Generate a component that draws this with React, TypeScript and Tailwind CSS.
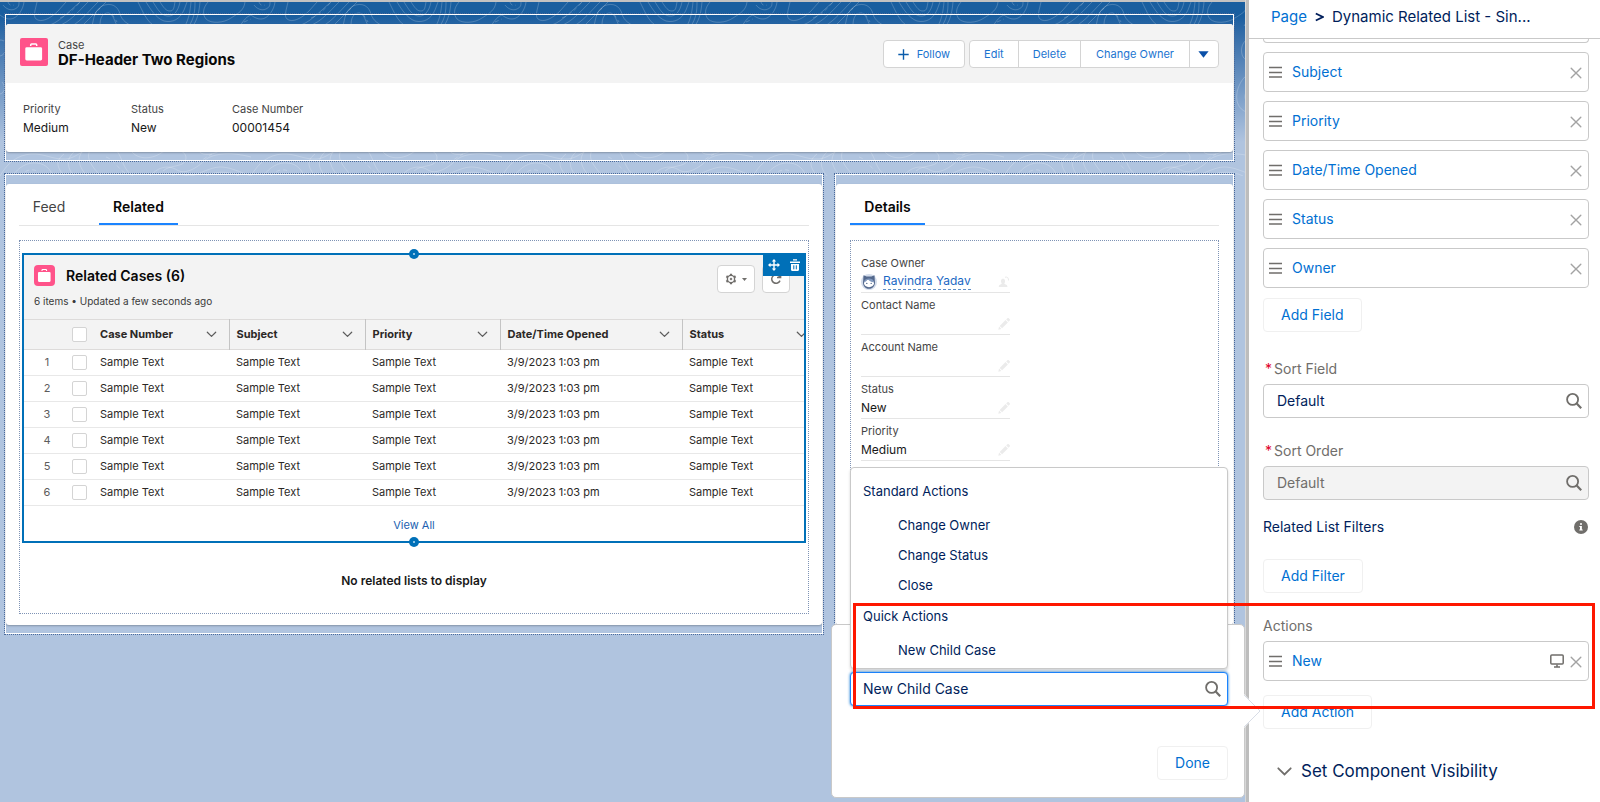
import React from 'react';

const columns = ['Case Number', 'Subject', 'Priority', 'Date/Time Opened', 'Status'];
const rows = [1, 2, 3, 4, 5, 6];
const relatedFields = ['Subject', 'Priority', 'Date/Time Opened', 'Status', 'Owner'];

function CaseIcon({ className }: { className: string }) {
  return (
    <svg viewBox="0 0 28 28" className={className} aria-hidden="true">
      <rect width="28" height="28" rx="2" fill="#ff538a" />
      <path d="M10.7 8V6.9c0-.5.4-.9.9-.9h4.2c.5 0 .9.4.9.9V8" fill="none" stroke="#fff" strokeWidth="1.5" />
      <rect x="5.3" y="9.3" width="16.8" height="13.2" rx="1.4" fill="#fff" />
    </svg>
  );
}

function Chevron({ className }: { className: string }) {
  return (
    <svg viewBox="0 0 12 8" className={className} fill="none" stroke="#5c5c5c" strokeWidth="1.4" strokeLinecap="round" strokeLinejoin="round" aria-hidden="true">
      <path d="M1.2 1.4 6 6.2l4.8-4.8" />
    </svg>
  );
}

function SearchIcon() {
  return (
    <svg viewBox="0 0 16 16" className="h-4 w-4 shrink-0" fill="none" stroke="#706e6b" aria-hidden="true">
      <circle cx="6.6" cy="6.4" r="5.5" strokeWidth="1.8" />
      <path d="m10.7 10.6 4.5 4.6" strokeWidth="2.2" />
    </svg>
  );
}

function CloseIcon() {
  return (
    <svg viewBox="0 0 12 12" className="h-3 w-3" fill="none" stroke="#a3a3a3" strokeWidth="1.4" strokeLinecap="round" aria-hidden="true">
      <path d="m1.2 1.2 9.6 9.6M10.8 1.2l-9.6 9.6" />
    </svg>
  );
}

function Topography() {
  return (
    <svg className="absolute inset-x-0 top-0 h-[174px] w-full" aria-hidden="true">
      <defs>
        <pattern id="topo" width="251" height="174" patternUnits="userSpaceOnUse">
          <g fill="none" stroke="#fff" strokeOpacity="0.2" strokeWidth="1">
            <path d="M0 13c5 4 10 5 14 3s9-8 10-16M3 3c3 4 8 6 12 4s4-4 4-7M37 0c-2 9-4 14-1 17 5 4 14 0 22-8l8-9M46 24c12-2 22-14 34-24M58 24c12-4 20-14 30-24M72 24c10-6 16-14 26-24M82 24l24-24" />
            <path d="M92 24c2-8 2-15 10-20 9-4 16 0 18 8 2 7 8 10 12 12M100 24c0-8 2-12 7-13s7 6 10 13M138 0c5 10 8 18 16 24M146 0c5 8 10 16 18 19 9 2 16-2 20-11l3-8M153 0c5 8 8 13 14 14s11-4 13-14M160 0c4 6 6 9 10 9s4-4 5-9M185 24c4-8 5-14 6-24M189 24c5-8 6-14 6-24M193 24c5-8 6-14 7-24" />
            <path d="M208 0c-5 6-6 12-2 17 5 5 18 4 25-1 8-5 13-8 14-16M240 24c4-6 6-9 11-11" />
            <path d="M8 0c1 3 3 4 6 3M60 16c8-3 14-9 20-16M94 14l6-8M112 12l5 8M244 20l7-3" strokeDasharray="4 3" />
            <path d="M0 38c10 0 8 14 0 16M246 36c-12 4-10 22-2 22s8-8 7-16M251 70c-12 0-22 20-17 32 3 8 12 10 17 8M251 82c-8 2-12 12-9 16s7 4 9 2M0 92c5-1 6-8 2-12" />
            <path d="M0 174c8-14 18-21 31-22s22 6 35 5 24-18 41-14 12 22 26 31M12 174c7-9 15-14 25-13s14 8 16 13M64 152c-9 7-7 13 0 22M74 150c-9 8-6 17 0 24M84 148c-9 8-4 18 3 26M92 146c-8 8-1 18 9 28M132 150c8 9 22 6 29 1s25-5 25 5-16 6-23 13M150 174c9-10 19-11 27-6s20-2 27-9 24-10 47-4M172 174c7-4 12 0 18 0s20-9 30-9 17 4 31 9M206 174c9-5 23-5 33 0M128 146c9-6 19-5 27 1M199 144c-4 9 11 11 20 5" />
            <path d="M20 174c4-5 11-8 17-5M106 155c9 3 12 12 19 16M190 160c9 3 15-5 22-8" strokeDasharray="4 3" />
          </g>
        </pattern>
      </defs>
      <rect width="100%" height="100%" fill="url(#topo)" />
    </svg>
  );
}

function Region({ children }: { children: React.ReactNode }) {
  return (
    <section className="flex min-w-0 border border-dotted border-[#4a6a9c]">
      <div className="flex min-w-0 flex-1 flex-col border border-white pt-[9px] pb-2">
        <div className="flex flex-1 flex-col overflow-hidden rounded-[3px] bg-white shadow-[0_1px_2px_rgba(0,0,0,0.25)]">{children}</div>
      </div>
    </section>
  );
}

function RecordHeader() {
  const stats = [
    { label: 'Priority', value: 'Medium', width: 'w-[108px]' },
    { label: 'Status', value: 'New', width: 'w-[101px]' },
    { label: 'Case Number', value: '00001454', width: 'w-[101px]' },
  ];
  return (
    <Region>
      <header className="flex h-[59px] items-start justify-between bg-[#f3f3f3] px-[14px]">
        <div className="flex pt-[14px]">
          <CaseIcon className="h-7 w-7" />
          <div className="ml-[10px]">
            <p className="text-[11px] leading-[14px] text-[#444]">Case</p>
            <h1 className="text-[15px] leading-4 font-bold text-[#080707]">DF-Header Two Regions</h1>
          </div>
        </div>
        <div className="flex gap-1 pt-4 text-[11px] text-[#1b74d0]">
          <button className="flex h-7 items-center gap-2 rounded border border-[#d4d4d4] bg-white px-[14px]">
            <svg viewBox="0 0 11 11" className="h-[11px] w-[11px]" stroke="#0b5cab" strokeWidth="1.4" aria-hidden="true">
              <path d="M5.5.3v10.4M.3 5.5h10.4" />
            </svg>
            Follow
          </button>
          <div className="flex h-7 divide-x divide-[#d4d4d4] rounded border border-[#d4d4d4] bg-white">
            <button className="px-[14px]">Edit</button>
            <button className="px-[14px]">Delete</button>
            <button className="px-[15px]">Change Owner</button>
            <button className="w-7 px-2" aria-label="More actions">
              <svg viewBox="0 0 11 7" className="h-[7px] w-[11px]" aria-hidden="true">
                <path d="M.4.3h10.2L5.5 6.7z" fill="#0b50a8" />
              </svg>
            </button>
          </div>
        </div>
      </header>
      <dl className="flex px-[17px] pt-[18px] pb-4">
        {stats.map((s) => (
          <div key={s.label} className={s.width}>
            <dt className="text-[11px] leading-4 text-[#444]">{s.label}</dt>
            <dd className="mt-[2px] text-xs leading-[17px] text-[#181818]">{s.value}</dd>
          </div>
        ))}
      </dl>
    </Region>
  );
}

function GearIcon() {
  return (
    <svg viewBox="0 0 12 12" className="h-3 w-3" fill="none" stroke="#706e6b" aria-hidden="true">
      <path d="M6 .8v1.6M6 9.6v1.6M1.4 3.3l1.5.9M9.1 7.8l1.5.9M1.4 8.7l1.5-.9M9.1 4.2l1.5-.9" strokeWidth="2.2" />
      <circle cx="6" cy="6" r="3.6" strokeWidth="1.4" />
      <circle cx="6" cy="6" r="1" fill="#706e6b" strokeWidth=".5" />
    </svg>
  );
}

function Handle({ className }: { className: string }) {
  return (
    <span className={`absolute left-1/2 flex h-[10px] w-[10px] -translate-x-1/2 items-center justify-center rounded-full bg-[#0070b8] ${className}`}>
      <span className="h-[2px] w-[2px] rounded-full bg-[#b9dcf2]" />
    </span>
  );
}

function Checkbox({ label }: { label: string }) {
  return (
    <input
      type="checkbox"
      aria-label={label}
      className="block h-[15px] w-[15px] appearance-none rounded-[2px] border border-[#d4d4d4] bg-white"
    />
  );
}

function RelatedCases() {
  return (
    <div className="relative mx-[2px] mt-3 border-2 border-[#0070b8]">
      <Handle className="-top-[6px]" />
      <Handle className="-bottom-[6px]" />
      <div className="flex h-16 justify-between bg-[#f3f3f3] px-[10px] pt-[10px]">
        <div>
          <div className="flex items-center">
            <CaseIcon className="h-[21px] w-[21px] rounded" />
            <h2 className="ml-[11px] text-sm leading-5 font-semibold text-[#080707]">Related Cases (6)</h2>
          </div>
          <p className="mt-[7px] text-[10px] leading-4 text-[#3a3a3a]">6 items • Updated a few seconds ago</p>
        </div>
        <div className="flex gap-[7px] pr-1">
          <button className="flex h-7 w-[38px] items-center justify-center gap-[5px] rounded border border-[#d4d4d4] bg-white" aria-label="List settings">
            <GearIcon />
            <svg viewBox="0 0 5 3" className="h-[3px] w-[5px]" aria-hidden="true">
              <path d="M0 0h5L2.5 3z" fill="#706e6b" />
            </svg>
          </button>
          <button className="flex h-7 w-7 items-center justify-center rounded border border-[#d4d4d4] bg-white" aria-label="Refresh">
            <svg viewBox="0 0 12 12" className="h-3 w-3" fill="none" stroke="#706e6b" strokeWidth="1.5" aria-hidden="true">
              <path d="M10 7.6A4.3 4.3 0 1 1 8.8 2.7l1.4 1.5M10.6 1v3.5H7" />
            </svg>
          </button>
        </div>
      </div>
      <div className="absolute -top-[2px] -right-[2px] flex h-[23px] w-[43px] items-center justify-between bg-[#0070b8] px-[5px]">
        <button aria-label="Move component">
          <svg viewBox="0 0 12 12" className="block h-3 w-3" fill="#fff" aria-hidden="true">
            <path d="M6 0l2.2 2.5H6.7v2.8h2.8V3.8L12 6 9.5 8.2V6.7H6.7v2.8h1.5L6 12 3.8 9.5h1.5V6.7H2.5v1.5L0 6l2.5-2.2v1.5h2.8V2.5H3.8z" />
          </svg>
        </button>
        <button aria-label="Delete component">
          <svg viewBox="0 0 12 12" className="block h-3 w-3" fill="none" aria-hidden="true">
            <path d="M1 2.5h10v1.6H1zM4 .3h4v1.2H4zM2 5h8v5.8c0 .6-.5 1.2-1.1 1.2H3.100C2.500 12 2 11.4 2 10.800z" fill="#fff" />
            <path d="M4.800 6.300v4M7.300 6.300v4" stroke="#0070b8" />
          </svg>
        </button>
      </div>
      <div className="overflow-hidden">
        <table className="w-[795px] table-fixed border-collapse text-left text-[11px] text-[#2b2826]">
          <colgroup>
            <col className="w-[42px]" />
            <col className="w-[27px]" />
            <col className="w-[136px]" />
            <col className="w-[136px]" />
            <col className="w-[135px]" />
            <col className="w-[182px]" />
            <col className="w-[137px]" />
          </colgroup>
          <thead>
            <tr className="h-[30px] border-y border-[#dddbda] bg-[#f3f3f3]">
              <td />
              <th className="pl-[6px]">
                <Checkbox label="Select all rows" />
              </th>
              {columns.map((c, i) => (
                <th key={c} className={i < columns.length - 1 ? 'border-r border-[#c4c4c4] pr-3 pl-[7px]' : 'pr-3 pl-[7px]'}>
                  <div className="flex items-center justify-between">
                    {c}
                    <Chevron className="h-[7px] w-[11px]" />
                  </div>
                </th>
              ))}
            </tr>
          </thead>
          <tbody>
            {rows.map((n) => (
              <tr key={n} className="h-[26px] border-b border-[#e8e8e8]">
                <td className="pl-1 text-center text-[#5c5c5c]">{n}</td>
                <td className="pl-[6px]">
                  <Checkbox label={`Select row ${n}`} />
                </td>
                {columns.map((c) => (
                  <td key={c} className="pl-[7px]">
                    {c === 'Date/Time Opened' ? '3/9/2023 1:03 pm' : 'Sample Text'}
                  </td>
                ))}
              </tr>
            ))}
          </tbody>
        </table>
      </div>
      <div className="flex h-[35px] items-center justify-center pt-1 text-[11px]">
        <a href="#all" className="text-[#1b5fb0]">View All</a>
      </div>
    </div>
  );
}

function RelatedRegion() {
  return (
    <Region>
      <div className="mx-[13px] flex h-[42px] border-b border-[#e5e5e5]" role="tablist">
        <button role="tab" aria-selected="false" className="w-[80px] pt-1 pr-5 text-center text-sm text-[#444]">Feed</button>
        <button role="tab" aria-selected="true" className="w-[79px] border-b-2 border-[#1b84ff] pt-[6px] text-sm font-semibold text-[#080707]">Related</button>
      </div>
      <div className="mx-[13px] mt-[14px] mb-[11px] flex-1 border border-dotted border-[#7f93b5]">
        <RelatedCases />
        <p className="pt-[30px] pb-6 text-center text-xs leading-4 font-semibold text-[#181818]">No related lists to display</p>
      </div>
    </Region>
  );
}

function Avatar() {
  return (
    <svg viewBox="0 0 16 16" className="h-4 w-4" aria-hidden="true">
      <circle cx="8" cy="8" r="8" fill="#d3dceb" />
      <path d="M2.5 1.3 5.6 2.6h4.800l3.100-1.300.3 5.200c1 5-2 8.300-5.800 8.300S1.200 11.500 2.200 6.500z" fill="#54698d" />
      <ellipse cx="8" cy="9.3" rx="5" ry="3.9" fill="#fff" />
      <path d="M3 8.200c2-.5 3-1.900 4-3 .8 1.400 3 2.800 6 3-.4-2.600-2.500-3.600-5-3.600S3.400 5.700 3 8.200z" fill="#8199bf" />
      <circle cx="5.8" cy="9.4" r=".7" fill="#54698d" />
      <circle cx="10.2" cy="9.4" r=".7" fill="#54698d" />
    </svg>
  );
}

function Pencil() {
  return (
    <svg viewBox="0 0 12 12" className="h-3 w-3" fill="#ebebeb" aria-hidden="true">
      <path d="m.3 11.7.8-3.1 2.3 2.3zM1.7 7.9l5.8-5.8 2.4 2.4-5.800 5.800zM8.200 1.400 9.400.3c.4-.4 1-.4 1.400 0l.9.9c.4.4.4 1 0 1.400l-1.100 1.200z" />
    </svg>
  );
}

function DetailField({ label, children, icon }: { label: string; children?: React.ReactNode; icon?: React.ReactNode }) {
  return (
    <div className="h-[42px] border-b border-[#e5e5e5] pt-1">
      <dt className="text-[11px] leading-4 text-[#444]">{label}</dt>
      <dd className="flex h-[21px] items-center justify-between text-xs leading-5 text-[#181818]">
        <span className="flex items-center">{children}</span>
        <button aria-label={`Edit ${label}`}>{icon ?? <Pencil />}</button>
      </dd>
    </div>
  );
}

function DetailsRegion() {
  return (
    <Region>
      <div className="mx-[14px] flex h-[42px] border-b border-[#e5e5e5]" role="tablist">
        <button role="tab" aria-selected="true" className="w-[75px] border-b-2 border-[#1b84ff] pt-[6px] text-sm font-semibold text-[#080707]">Details</button>
      </div>
      <div className="mx-[14px] mt-[14px] mb-[11px] flex-1 border border-dotted border-[#7f93b5] px-[10px] pt-[10px]">
        <dl className="w-[149px]">
          <DetailField
            label="Case Owner"
            icon={
              <svg viewBox="0 0 12 12" className="h-3 w-3" aria-hidden="true">
                <path d="M.8 11c0-2.5 2-2.5 3-3.3C2.500 5.500 2.800 2.800 5 2.800s2.700 2.700 1.300 4.900c1 .8 3.200.8 3.200 3.300z" fill="#ebebeb" />
                <path d="M7 1.200c2.500-.6 3.800.8 3.500 3.300" fill="none" stroke="#ebebeb" />
              </svg>
            }
          >
            <Avatar />
            <a href="#owner" className="ml-[6px] border-b border-dashed border-[#1b5fb0]/70 leading-4 text-[#1b68c4]">Ravindra Yadav</a>
          </DetailField>
          <DetailField label="Contact Name" />
          <DetailField label="Account Name" />
          <DetailField label="Status">New</DetailField>
          <DetailField label="Priority">Medium</DetailField>
        </dl>
      </div>
    </Region>
  );
}

function ActionPopover() {
  const standard = ['Change Owner', 'Change Status', 'Close'];
  return (
    <div className="absolute top-[624px] right-0 h-[174px] w-[414px] rounded-[5px] border border-[#c9c9c9] bg-white pt-[47px] pr-4 pl-[18px]">
      <svg viewBox="0 0 17 34" className="absolute top-[69px] -right-[17px] h-[34px] w-[17px]" aria-hidden="true">
        <path d="M0 0v34L16.5 17z" fill="#fff" />
        <path d="M0 1 16 17 0 33" fill="none" stroke="#d8dde6" />
      </svg>
      <div className="relative">
        <ul className="absolute inset-x-0 bottom-[37px] rounded border border-[#c9c9c9] bg-white pt-2 text-[13px] text-[#001e5b] shadow-[0_2px_3px_rgba(0,0,0,0.16)]" role="listbox" aria-label="Available actions">
          <li className="px-3 py-[5px] leading-5" role="presentation">Standard Actions</li>
          <li role="presentation" className="pt-1">
            <ul role="group" aria-label="Standard Actions">
              {standard.map((a) => (
                <li key={a} role="option" aria-selected="false" className="h-[30px] pl-[47px] leading-[30px]">{a}</li>
              ))}
            </ul>
          </li>
          <li className="px-3 py-2 leading-4" role="presentation">Quick Actions</li>
          <li role="option" aria-selected="true" className="h-9 pl-[47px] leading-9">New Child Case</li>
        </ul>
        <div className="flex h-[34px] items-center rounded border border-[#1b84ff] bg-white pr-[6px] pl-3 shadow-[0_0_3px_#0070d2]">
          <input aria-label="Action" defaultValue="New Child Case" className="min-w-0 flex-1 bg-transparent text-sm text-[#001e5b] outline-none" />
          <SearchIcon />
        </div>
      </div>
      <div className="mt-10 flex justify-end">
        <button className="h-[34px] rounded border border-[#f0f0f0] px-[17px] text-sm text-[#0070d2]">Done</button>
      </div>
    </div>
  );
}

function ListItem({ label, extra }: { label: string; extra?: React.ReactNode }) {
  return (
    <li className="flex h-10 items-center rounded border border-[#c9c9c9] bg-white pr-[6px] pl-[5px]">
      <svg viewBox="0 0 13 12" className="h-3 w-[13px]" stroke="#706e6b" strokeWidth="1.5" aria-hidden="true">
        <path d="M0 1.500h13M0 6.500h13M0 11h13" />
      </svg>
      <a href="#field" className="ml-[10px] flex-1 text-sm text-[#0070d2]">{label}</a>
      {extra}
      <button aria-label={`Remove ${label}`} className="pt-[2px]">
        <CloseIcon />
      </button>
    </li>
  );
}

function SortInput({ id, label, disabled = false }: { id: string; label: string; disabled?: boolean }) {
  return (
    <div>
      <label htmlFor={id} className="flex gap-[2px] pl-[2px] text-sm leading-5 text-[#706e6b]">
        <span className="text-[#e0002a]">*</span>
        {label}
      </label>
      <div className={`mt-[5px] flex h-[34px] items-center rounded border border-[#c9c9c9] pr-[6px] pl-[13px] ${disabled ? 'bg-[#f3f3f3] text-[#706e6b]' : 'bg-white text-[#001e5b]'}`}>
        <input id={id} defaultValue="Default" disabled={disabled} className="min-w-0 flex-1 bg-transparent text-sm outline-none" />
        <SearchIcon />
      </div>
    </div>
  );
}

function AddButton({ children }: { children: React.ReactNode }) {
  return <button className="h-[34px] self-start rounded border border-[#f0f0f0] px-[17px] text-sm text-[#0070d2]">{children}</button>;
}

function PropertyPanel() {
  return (
    <aside className="flex w-[351px] shrink-0 flex-col bg-white">
      <nav className="flex h-[39px] items-center gap-2 border-b border-[#c9c9c9] pb-1 pl-[22px] text-[15px]" aria-label="Breadcrumb">
        <a href="#page" className="text-[#0070d2]">Page</a>
        <svg viewBox="0 0 9 10" className="h-[10px] w-[9px]" fill="none" stroke="#001e5b" strokeWidth="1.8" aria-hidden="true">
          <path d="m.8 1.5 7 3.5-7 3.5" />
        </svg>
        <span className="text-[#001e5b]">Dynamic Related List - Sin...</span>
      </nav>
      <div className="flex flex-col pr-[11px] pl-[14px]">
        <div className="h-1 rounded-b border border-t-0 border-[#c9c9c9]" />
        <ul className="mt-[9px] flex flex-col gap-[9px]">
          {relatedFields.map((f) => (
            <ListItem key={f} label={f} />
          ))}
        </ul>
        <div className="mt-[10px] flex"><AddButton>Add Field</AddButton></div>
        <div className="mt-[27px]"><SortInput id="sort-field" label="Sort Field" /></div>
        <div className="mt-[23px]"><SortInput id="sort-order" label="Sort Order" disabled /></div>
        <div className="mt-[17px] flex items-center justify-between pr-[1px] text-sm leading-5 text-[#001e5b]">
          Related List Filters
          <svg viewBox="0 0 14 14" className="h-[14px] w-[14px]" aria-label="Information" role="img">
            <circle cx="7" cy="7" r="7" fill="#706e6b" />
            <path d="M6 3.2h2v1.600H6zM5.300 6h2.600v3.600h.8v1H5.300v-1H6V7h-.7z" fill="#fff" />
          </svg>
        </div>
        <div className="mt-[22px] flex"><AddButton>Add Filter</AddButton></div>
        <h3 className="mt-[23px] text-sm leading-5 text-[#706e6b]">Actions</h3>
        <ul className="mt-[5px]">
          <ListItem
            label="New"
            extra={
              <svg viewBox="0 0 14 14" className="mr-[6px] h-[14px] w-[14px]" fill="none" stroke="#706e6b" aria-hidden="true">
                <rect x=".8" y="1" width="12.4" height="9" rx="1" strokeWidth="1.5" />
                <path d="M7 10.5v2M4 13h6" strokeWidth="1.5" />
              </svg>
            }
          />
        </ul>
        <div className="mt-[14px] flex"><AddButton>Add Action</AddButton></div>
        <button className="mt-[30px] flex items-center gap-[9px] self-start pl-[14px] text-[17px] leading-6 text-[#001e5b]">
          <svg viewBox="0 0 15 9" className="h-[9px] w-[15px]" fill="none" stroke="#706e6b" strokeWidth="1.8" strokeLinecap="round" aria-hidden="true">
            <path d="m1.3 1.3 6.2 6.2 6.2-6.2" />
          </svg>
          Set Component Visibility
        </button>
      </div>
    </aside>
  );
}

export default function App() {
  return (
    <div className="relative flex min-h-screen overflow-hidden font-['Inter','Liberation_Sans',sans-serif]">
      <main className="relative min-w-0 flex-1 border-t-2 border-[#c2c2c2] bg-[#b0c4df]">
        <div className="absolute inset-x-0 top-0 h-[140px] bg-linear-to-b from-[#195e9f] from-10% to-[#b0c4df]" />
        <Topography />
        <div className="relative flex flex-col gap-[11px] pt-[11px] pr-[10px] pb-[165px] pl-1">
          <RecordHeader />
          <div className="grid grid-cols-[820fr_401fr] gap-[10px]">
            <RelatedRegion />
            <DetailsRegion />
          </div>
        </div>
      </main>
      <div className="w-1 shrink-0 border-l border-[#d8d8d8] bg-[#bdbdbd]" />
      <PropertyPanel />
      <div className="pointer-events-none absolute inset-y-0 right-[355px] left-0">
        <div className="pointer-events-auto">
          <ActionPopover />
        </div>
      </div>
      <div className="pointer-events-none absolute top-[603px] right-[5px] h-[106px] w-[742px] border-3 border-[#fe1700]" />
    </div>
  );
}
